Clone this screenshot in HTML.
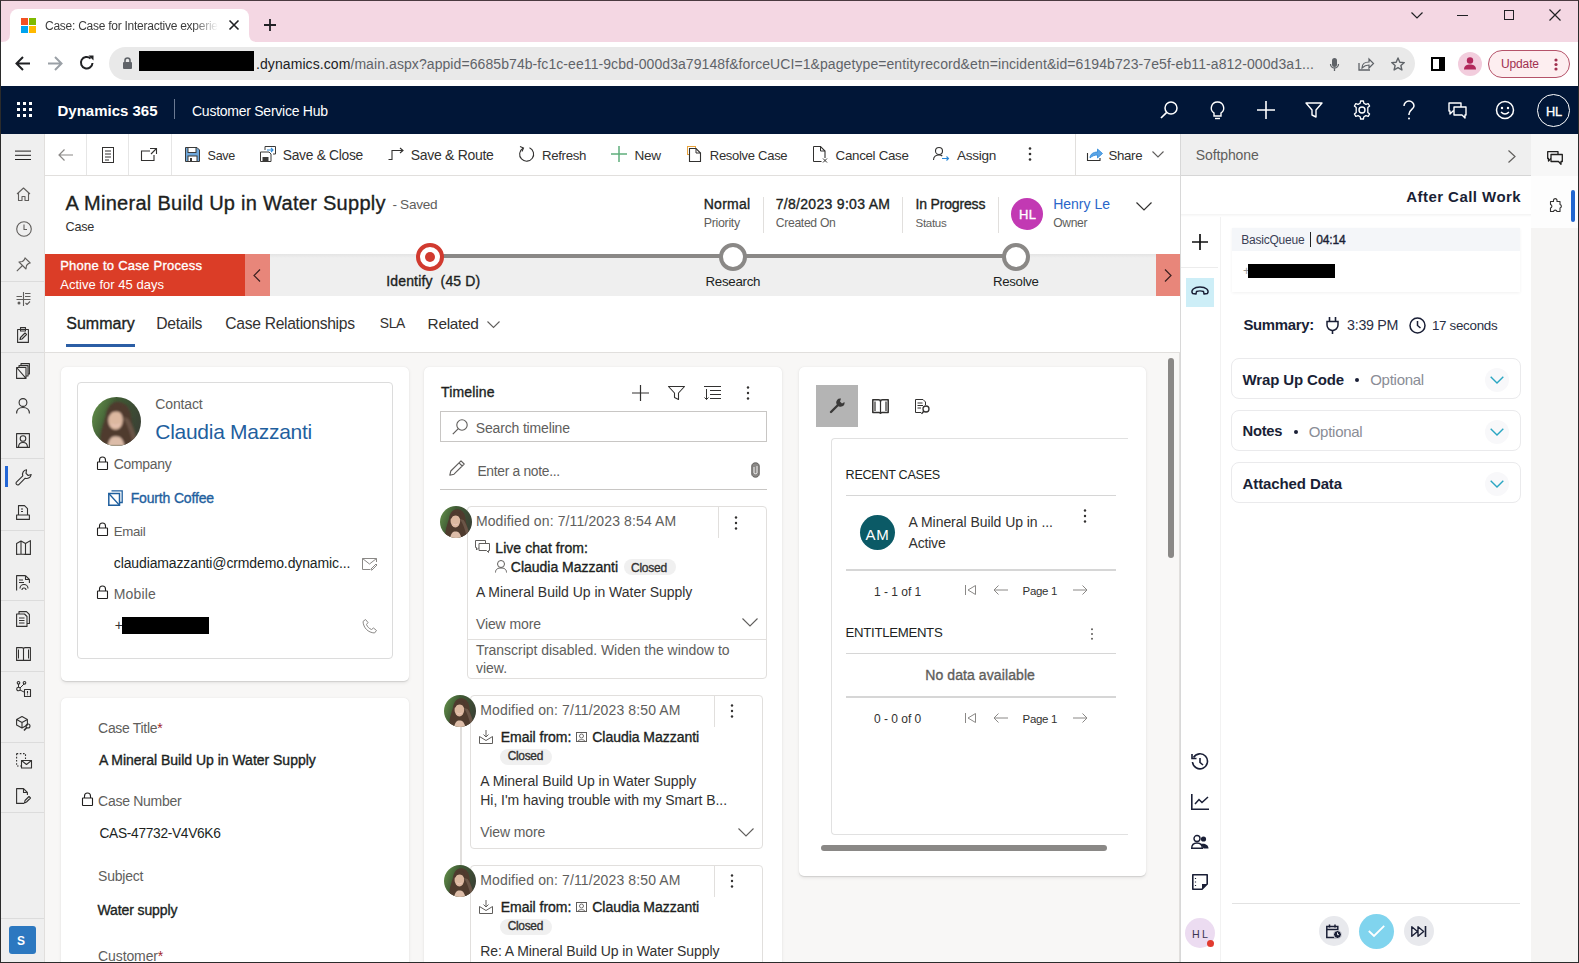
<!DOCTYPE html>
<html><head><meta charset="utf-8">
<style>
*{box-sizing:border-box;margin:0;padding:0}
html,body{width:1579px;height:963px;overflow:hidden;background:#fff;font-family:"Liberation Sans",sans-serif;color:#323130}
.a{position:absolute}
.t{position:absolute;white-space:nowrap;line-height:1}
svg{position:absolute;overflow:visible}
</style></head><body>
<div class="a" style="left:0px;top:0px;width:1579px;height:42px;background:#f4d7e3;"></div>
<div class="a" style="left:10px;top:9px;width:239px;height:34px;background:#fff;border-radius:8px 8px 0 0"></div>
<svg style="left:2px;top:34px;" width="8" height="8" viewBox="0 0 8 8"><path d="M0 8 Q8 8 8 0 L8 8 Z" fill="#fff"/></svg>
<svg style="left:249px;top:34px;" width="8" height="8" viewBox="0 0 8 8"><path d="M8 8 Q0 8 0 0 L0 8 Z" fill="#fff"/></svg>
<div class="a" style="left:21px;top:18px;width:7px;height:7px;background:#f25022;"></div>
<div class="a" style="left:29px;top:18px;width:7px;height:7px;background:#7fba00;"></div>
<div class="a" style="left:21px;top:26px;width:7px;height:7px;background:#00a4ef;"></div>
<div class="a" style="left:29px;top:26px;width:7px;height:7px;background:#ffb900;"></div>
<div class="t" style="left:45.0px;top:19.8px;font-size:12px;color:#3c3c3c;letter-spacing:-0.255px;-webkit-mask-image:linear-gradient(90deg,#000 85%,transparent 100%);">Case: Case for Interactive experie</div>
<svg style="left:229px;top:20px;" width="10" height="10" viewBox="0 0 10 10"><path d="M0.5 0.5L9.5 9.5M9.5 0.5L0.5 9.5" stroke="#202124" stroke-width="1.6"/></svg>
<svg style="left:264px;top:19px;" width="12" height="12" viewBox="0 0 12 12"><path d="M6 0V12M0 6H12" stroke="#202124" stroke-width="1.8"/></svg>
<svg style="left:1411px;top:12px;" width="12" height="7" viewBox="0 0 12 7"><path d="M0.5 0.5L6 6L11.5 0.5" stroke="#202124" stroke-width="1.2" fill="none"/></svg>
<svg style="left:1457px;top:15px;" width="11" height="1" viewBox="0 0 11 1"><path d="M0 0.5H11" stroke="#202124" stroke-width="1"/></svg>
<svg style="left:1504px;top:10px;" width="10" height="10" viewBox="0 0 10 10"><rect x="0.5" y="0.5" width="9" height="9" stroke="#202124" stroke-width="1" fill="none"/></svg>
<svg style="left:1549px;top:9px;" width="12" height="12" viewBox="0 0 12 12"><path d="M0.5 0.5L11.5 11.5M11.5 0.5L0.5 11.5" stroke="#202124" stroke-width="1.2"/></svg>
<div class="a" style="left:0px;top:42px;width:1579px;height:44px;background:#fff;"></div>
<svg style="left:15px;top:56px;" width="16" height="15" viewBox="0 0 16 15"><path d="M15 7.5H2M8 1L1.5 7.5L8 14" stroke="#202124" stroke-width="2" fill="none"/></svg>
<svg style="left:47px;top:56px;" width="16" height="15" viewBox="0 0 16 15"><path d="M1 7.5H14M8 1L14.5 7.5L8 14" stroke="#9aa0a6" stroke-width="2" fill="none"/></svg>
<svg style="left:79px;top:55px;" width="16" height="16" viewBox="0 0 16 16"><path d="M13.5 8A5.8 5.8 0 1 1 11.6 3.4" stroke="#202124" stroke-width="2" fill="none"/><path d="M9.5 0.5H14.5V5.5Z" fill="#202124"/></svg>
<div class="a" style="left:109px;top:47px;width:1306px;height:33px;background:#e9e9e9;border-radius:17px"></div>
<svg style="left:123px;top:57px;" width="9" height="12" viewBox="0 0 9 12"><rect x="0" y="5" width="9" height="7" rx="1" fill="#5f6368"/><path d="M2 5.5V3.5A2.5 2.5 0 0 1 7 3.5V5.5" stroke="#5f6368" stroke-width="1.6" fill="none"/></svg>
<div class="a" style="left:139px;top:51px;width:115px;height:20px;background:#000;"></div>
<div class="t" style="left:256px;top:57.1px;font-size:14px;color:#202124;letter-spacing:0.08px">.dynamics.com<span style="color:#5f6368">/main.aspx?appid=6685b74b-fc1c-ee11-9cbd-000d3a79148f&amp;forceUCI=1&amp;pagetype=entityrecord&amp;etn=incident&amp;id=6194b723-7e5f-eb11-a812-000d3a1...</span></div>
<svg style="left:1330px;top:58px;" width="9" height="13" viewBox="0 0 9 13"><rect x="2" y="0" width="5" height="9" rx="2.5" fill="#5f6368"/><path d="M0.5 6A4 4 0 0 0 8.5 6M4.5 10V13" stroke="#5f6368" stroke-width="1.3" fill="none"/></svg>
<svg style="left:1358px;top:58px;" width="16" height="13" viewBox="0 0 16 13"><path d="M1 5V12H12" stroke="#5f6368" stroke-width="1.3" fill="none"/><path d="M4 10C4 6 7 4 11 4V1L15.5 5.5L11 10V7C8 7 6 8 4 10Z" stroke="#5f6368" stroke-width="1.2" fill="none"/></svg>
<svg style="left:1391px;top:57px;" width="14" height="14" viewBox="0 0 14 14"><path d="M7 1L8.8 5.2L13.3 5.6L9.9 8.6L10.9 13L7 10.7L3.1 13L4.1 8.6L0.7 5.6L5.2 5.2Z" stroke="#5f6368" stroke-width="1.4" fill="none" stroke-linejoin="round"/></svg>
<svg style="left:1431px;top:57px;" width="14" height="14" viewBox="0 0 14 14"><rect x="1" y="1" width="12" height="12" stroke="#000" stroke-width="2" fill="none"/><rect x="8" y="1" width="5" height="12" fill="#000"/></svg>
<div class="a" style="left:1458px;top:52px;width:24px;height:24px;border-radius:50%;background:#f2cddd"></div>
<svg style="left:1463px;top:56px;" width="14" height="14" viewBox="0 0 14 14"><circle cx="7" cy="4.5" r="3.2" fill="#b2275b"/><path d="M1 13.5C1 9.5 4 8.5 7 8.5C10 8.5 13 9.5 13 13.5Z" fill="#b2275b"/></svg>
<div class="a" style="left:1488px;top:50px;width:82px;height:28px;border-radius:14px;border:1px solid #b5536a;background:#fdeef0"></div>
<div class="t" style="left:1501.0px;top:58.1px;font-size:12px;color:#a0304f;letter-spacing:-0.139px;">Update</div>
<svg style="left:1554px;top:58px;" width="4" height="13" viewBox="0 0 4 13"><circle cx="2" cy="2" r="1.6" fill="#a0304f"/><circle cx="2" cy="6.5" r="1.6" fill="#a0304f"/><circle cx="2" cy="11" r="1.6" fill="#a0304f"/></svg>
<div class="a" style="left:0px;top:86px;width:1579px;height:48px;background:#011637;"></div>
<svg style="left:17px;top:102px;" width="15" height="15" viewBox="0 0 15 15"><rect x="0" y="0" width="3" height="3" fill="#fff"/><rect x="6" y="0" width="3" height="3" fill="#fff"/><rect x="12" y="0" width="3" height="3" fill="#fff"/><rect x="0" y="6" width="3" height="3" fill="#fff"/><rect x="6" y="6" width="3" height="3" fill="#fff"/><rect x="12" y="6" width="3" height="3" fill="#fff"/><rect x="0" y="12" width="3" height="3" fill="#fff"/><rect x="6" y="12" width="3" height="3" fill="#fff"/><rect x="12" y="12" width="3" height="3" fill="#fff"/></svg>
<div class="t" style="left:57.5px;top:103.1px;font-size:15px;font-weight:bold;color:#fff;letter-spacing:-0.006px;">Dynamics 365</div>
<div class="a" style="left:174px;top:99px;width:1px;height:20px;background:#6b7a93;"></div>
<div class="t" style="left:192.0px;top:103.9px;font-size:14px;color:#fff;letter-spacing:-0.254px;">Customer Service Hub</div>
<svg style="left:1160px;top:101px;" width="18" height="18" viewBox="0 0 18 18"><circle cx="11" cy="7" r="6" stroke="#fff" stroke-width="1.5" fill="none"/><path d="M6.7 11.3L1 17" stroke="#fff" stroke-width="1.7"/></svg>
<svg style="left:1210px;top:101px;" width="15" height="19" viewBox="0 0 15 19"><path d="M7.5 1A6 6 0 0 0 4 12V15H11V12A6 6 0 0 0 7.5 1Z" stroke="#fff" stroke-width="1.4" fill="none"/><path d="M5 17.5H10" stroke="#fff" stroke-width="1.4"/></svg>
<svg style="left:1257px;top:101px;" width="18" height="18" viewBox="0 0 18 18"><path d="M9 0V18M0 9H18" stroke="#fff" stroke-width="1.6"/></svg>
<svg style="left:1305px;top:102px;" width="18" height="16" viewBox="0 0 18 16"><path d="M1 1H17L11 8V15L7 13V8Z" stroke="#fff" stroke-width="1.4" fill="none" stroke-linejoin="round"/></svg>
<svg style="left:1352px;top:100px;" width="20" height="20" viewBox="0 0 20 20"><circle cx="10" cy="10" r="3" stroke="#fff" stroke-width="1.4" fill="none"/><path d="M8.6 1H11.4L11.9 3.3L13.9 4.4L16.2 3.6L17.6 6L15.8 7.6V10V12.4L17.6 14L16.2 16.4L13.9 15.6L11.9 16.7L11.4 19H8.6L8.1 16.7L6.1 15.6L3.8 16.4L2.4 14L4.2 12.4V7.6L2.4 6L3.8 3.6L6.1 4.4L8.1 3.3Z" stroke="#fff" stroke-width="1.3" fill="none" stroke-linejoin="round"/></svg>
<svg style="left:1403px;top:101px;" width="12" height="19" viewBox="0 0 12 19"><path d="M1 5A5 5 0 0 1 11 5C11 8 6 9 6 13V14" stroke="#fff" stroke-width="1.5" fill="none"/><circle cx="6" cy="17.5" r="1" fill="#fff"/></svg>
<svg style="left:1448px;top:102px;" width="19" height="17" viewBox="0 0 19 17"><path d="M1 1H13V9H5L2 12V9H1Z" stroke="#fff" stroke-width="1.4" fill="none" stroke-linejoin="round"/><path d="M6 5H18V13H17V16L14 13H6Z" stroke="#fff" stroke-width="1.4" fill="#031838" stroke-linejoin="round"/></svg>
<svg style="left:1495px;top:100px;" width="20" height="20" viewBox="0 0 20 20"><circle cx="10" cy="10" r="8.5" stroke="#fff" stroke-width="1.5" fill="none"/><circle cx="7" cy="8" r="1.2" fill="#fff"/><circle cx="13" cy="8" r="1.2" fill="#fff"/><path d="M6 12Q10 16 14 12" stroke="#fff" stroke-width="1.4" fill="none"/></svg>
<div class="a" style="left:1537px;top:94px;width:33px;height:33px;border-radius:50%;border:1px solid #fff"></div>
<div class="t" style="left:1546.0px;top:105.7px;font-size:12.75px;-webkit-text-stroke:0.35px #fff;color:#fff;letter-spacing:-0.300px;">HL</div>
<div class="a" style="left:0px;top:134px;width:45px;height:829px;background:#efefef;border-right:1px solid #e1dfdd;"></div>
<div class="a" style="left:1px;top:281px;width:43px;height:1px;background:#dcdcdc;"></div>
<div class="a" style="left:1px;top:352px;width:43px;height:1px;background:#dcdcdc;"></div>
<div class="a" style="left:1px;top:458px;width:43px;height:1px;background:#dcdcdc;"></div>
<div class="a" style="left:1px;top:530px;width:43px;height:1px;background:#dcdcdc;"></div>
<div class="a" style="left:1px;top:600px;width:43px;height:1px;background:#dcdcdc;"></div>
<div class="a" style="left:1px;top:671px;width:43px;height:1px;background:#dcdcdc;"></div>
<div class="a" style="left:1px;top:742px;width:43px;height:1px;background:#dcdcdc;"></div>
<div class="a" style="left:1px;top:812px;width:43px;height:1px;background:#dcdcdc;"></div>
<div class="a" style="left:1px;top:918px;width:43px;height:1px;background:#dcdcdc;"></div>
<div class="a" style="left:5px;top:466px;width:3px;height:21px;background:#2266d6;"></div>
<div class="a" style="left:9px;top:926px;width:27px;height:28px;border-radius:3px;background:#2c78c0"></div>
<div class="t" style="left:17.0px;top:934.8px;font-size:12px;font-weight:bold;color:#fff;">S</div>
<div class="a" style="left:45px;top:134px;width:1136px;height:42px;background:#fff;border-bottom:1px solid #e1dfdd;"></div>
<svg style="left:15px;top:150px;" width="16" height="10" viewBox="0 0 16 10"><path d="M0 1.1H16M0 5.3H16M0 9.5H16" stroke="#201f1e" stroke-width="1"/></svg>
<div class="a" style="left:86px;top:134px;width:1px;height:41px;background:#e6e6e6;"></div>
<div class="a" style="left:128px;top:134px;width:1px;height:41px;background:#e6e6e6;"></div>
<div class="a" style="left:171px;top:134px;width:1px;height:41px;background:#e6e6e6;"></div>
<svg style="left:58px;top:149px;" width="15" height="12" viewBox="0 0 15 12"><path d="M15 6H1M6.5 0.5L1 6L6.5 11.5" stroke="#8a8886" stroke-width="1.2" fill="none"/></svg>
<svg style="left:102px;top:147px;" width="12" height="16" viewBox="0 0 12 16"><rect x="0.5" y="0.5" width="11" height="15" stroke="#323130" stroke-width="1" fill="none"/><path d="M3 4H9M3 7H9M3 10H9M3 13H7" stroke="#323130" stroke-width="1"/></svg>
<svg style="left:141px;top:148px;" width="16" height="13" viewBox="0 0 16 13"><path d="M9 3H0.5V12.5H13V7" stroke="#323130" stroke-width="1.1" fill="none"/><path d="M9 0.5H15.5V6M15.5 0.5L10 6" stroke="#323130" stroke-width="1.1" fill="none"/></svg>
<svg style="left:185px;top:147px;" width="15" height="15" viewBox="0 0 15 15"><path d="M0.5 0.5H12L14.5 3V14.5H0.5Z" fill="#6fa8dc" stroke="#3b3a39" stroke-width="1"/><rect x="3" y="0.5" width="8" height="5" fill="#fff" stroke="#3b3a39" stroke-width="1"/><rect x="3" y="9" width="9" height="5.5" fill="#fff" stroke="#3b3a39" stroke-width="1"/><rect x="5" y="11" width="2" height="3" fill="#3b3a39"/></svg>
<div class="t" style="left:207.6px;top:149.6px;font-size:12.55px;color:#323130;letter-spacing:-0.300px;">Save</div>
<svg style="left:260px;top:146px;" width="16" height="16" viewBox="0 0 16 16"><path d="M0.5 6H9L11 8V15.5H0.5Z" fill="#fff" stroke="#3b3a39" stroke-width="1"/><rect x="2.5" y="11" width="6" height="4.5" fill="#3b3a39"/><path d="M5 4V0.5H15.5V8H13" stroke="#3b3a39" stroke-width="1" fill="none"/><path d="M7 4H13M11 2L13 4L11 6" stroke="#2b88d8" stroke-width="1.1" fill="none"/></svg>
<div class="t" style="left:282.8px;top:148.5px;font-size:13.83px;color:#323130;letter-spacing:-0.300px;">Save &amp; Close</div>
<svg style="left:388px;top:148px;" width="16" height="12" viewBox="0 0 16 12"><path d="M0.5 11.5H4V2.5H15M12 0L15 2.5L12 5" stroke="#323130" stroke-width="1.1" fill="none"/></svg>
<div class="t" style="left:410.8px;top:148.4px;font-size:13.99px;color:#323130;letter-spacing:-0.300px;">Save &amp; Route</div>
<svg style="left:518px;top:146px;" width="17" height="16" viewBox="0 0 17 16"><path d="M5 2.2A7 7 0 1 0 11.5 1.8" stroke="#323130" stroke-width="1.1" fill="none"/><path d="M2 0.5L5.5 2L4 5.5" stroke="#323130" stroke-width="1.1" fill="none"/></svg>
<div class="t" style="left:541.9px;top:149.0px;font-size:13.25px;color:#323130;letter-spacing:-0.300px;">Refresh</div>
<svg style="left:611px;top:146px;" width="16" height="16" viewBox="0 0 16 16"><path d="M8 0V16M0 8H16" stroke="#5fae7c" stroke-width="1.5"/></svg>
<div class="t" style="left:634.6px;top:148.7px;font-size:13.6px;color:#323130;letter-spacing:-0.300px;">New</div>
<svg style="left:687px;top:146px;" width="14" height="16" viewBox="0 0 14 16"><rect x="0.5" y="0.5" width="8" height="8" fill="none" stroke="#e8a33c" stroke-width="1"/><path d="M2.5 2.5H9L13.5 7V15.5H2.5Z" fill="#fff" stroke="#323130" stroke-width="1.1"/><path d="M9 2.5V7H13.5" stroke="#323130" stroke-width="1" fill="none"/></svg>
<div class="t" style="left:709.8px;top:149.2px;font-size:13.04px;color:#323130;letter-spacing:-0.300px;">Resolve Case</div>
<svg style="left:813px;top:146px;" width="16" height="17" viewBox="0 0 16 17"><path d="M0.5 0.5H7.5L12 5V12M8.5 15.5H0.5Z" fill="none" stroke="#323130" stroke-width="1.1"/><path d="M0.5 0.5V15.5M7.5 0.5V5H12" stroke="#323130" stroke-width="1" fill="none"/><path d="M10 12.5L14 16.5M14 12.5L10 16.5" stroke="#323130" stroke-width="1"/></svg>
<div class="t" style="left:835.6px;top:148.9px;font-size:13.33px;color:#323130;letter-spacing:-0.300px;">Cancel Case</div>
<svg style="left:933px;top:147px;" width="16" height="14" viewBox="0 0 16 14"><circle cx="6" cy="4" r="3.5" stroke="#323130" stroke-width="1.1" fill="none"/><path d="M0.5 13C0.5 9.5 3 8 6 8C7.5 8 8.5 8.3 9.3 9" stroke="#323130" stroke-width="1.1" fill="none"/><path d="M9 11.5H15.5M13.5 9.5L15.5 11.5L13.5 13.5" stroke="#2b88d8" stroke-width="1.1" fill="none"/></svg>
<div class="t" style="left:957.0px;top:148.7px;font-size:13.59px;color:#323130;letter-spacing:-0.300px;">Assign</div>
<svg style="left:1028px;top:147px;" width="4" height="14" viewBox="0 0 4 14"><circle cx="2" cy="1.5" r="1.3" fill="#323130"/><circle cx="2" cy="7" r="1.3" fill="#323130"/><circle cx="2" cy="12.5" r="1.3" fill="#323130"/></svg>
<div class="a" style="left:1075px;top:134px;width:1px;height:41px;background:#e1dfdd;"></div>
<svg style="left:1087px;top:148px;" width="16" height="13" viewBox="0 0 16 13"><path d="M0.5 5V12.5H13V10" stroke="#323130" stroke-width="1.1" fill="none"/><path d="M3 10C3 6 6.5 4 10.5 4V1L15.5 5.5L10.5 10V7C7.5 7 5 8 3 10Z" fill="#5ba4e5" stroke="#2b88d8" stroke-width="0.8"/></svg>
<div class="t" style="left:1108.4px;top:149.0px;font-size:13.27px;color:#323130;letter-spacing:-0.300px;">Share</div>
<svg style="left:1152px;top:151px;" width="12" height="7" viewBox="0 0 12 7"><path d="M0.5 0.5L6 6L11.5 0.5" stroke="#605e5c" stroke-width="1.1" fill="none"/></svg>
<div class="a" style="left:45px;top:176px;width:1136px;height:78px;background:#fff;"></div>
<div class="t" style="left:65.6px;top:193.4px;font-size:20px;-webkit-text-stroke:0.35px #201f1e;color:#201f1e;letter-spacing:0.287px;">A Mineral Build Up in Water Supply</div>
<div class="t" style="left:392.4px;top:198.3px;font-size:13.61px;color:#605e5c;letter-spacing:-0.300px;">- Saved</div>
<div class="t" style="left:65.6px;top:221.2px;font-size:12.64px;color:#323130;letter-spacing:-0.300px;">Case</div>
<div class="t" style="left:703.7px;top:197.4px;font-size:14px;-webkit-text-stroke:0.35px #201f1e;color:#201f1e;letter-spacing:0.276px;">Normal</div>
<div class="t" style="left:703.7px;top:217.0px;font-size:12.41px;color:#605e5c;letter-spacing:-0.300px;">Priority</div>
<div class="a" style="left:763px;top:197px;width:1px;height:36px;background:#e1dfdd;"></div>
<div class="t" style="left:775.7px;top:197.4px;font-size:14px;-webkit-text-stroke:0.35px #201f1e;color:#201f1e;letter-spacing:0.304px;">7/8/2023 9:03 AM</div>
<div class="t" style="left:775.7px;top:217.2px;font-size:12.17px;color:#605e5c;letter-spacing:-0.300px;">Created On</div>
<div class="a" style="left:902px;top:197px;width:1px;height:36px;background:#e1dfdd;"></div>
<div class="t" style="left:915.5px;top:197.4px;font-size:14px;-webkit-text-stroke:0.35px #201f1e;color:#201f1e;letter-spacing:-0.168px;">In Progress</div>
<div class="t" style="left:915.5px;top:217.7px;font-size:11.57px;color:#605e5c;letter-spacing:-0.300px;">Status</div>
<div class="a" style="left:998px;top:197px;width:1px;height:36px;background:#e1dfdd;"></div>
<div class="a" style="left:1011px;top:198px;width:32px;height:32px;border-radius:50%;background:#c239b3"></div>
<div class="t" style="left:1019.0px;top:208.0px;font-size:13px;-webkit-text-stroke:0.35px #fff;color:#fff;letter-spacing:0.383px;">HL</div>
<div class="t" style="left:1053.2px;top:197.4px;font-size:14px;color:#2a66c9;letter-spacing:-0.001px;">Henry Le</div>
<div class="t" style="left:1053.2px;top:217.3px;font-size:12.09px;color:#605e5c;letter-spacing:-0.300px;">Owner</div>
<svg style="left:1136px;top:202px;" width="16" height="9" viewBox="0 0 16 9"><path d="M0.5 0.5L8 8L15.5 0.5" stroke="#323130" stroke-width="1.2" fill="none"/></svg>
<div class="a" style="left:45px;top:254px;width:200px;height:42px;background:#db3d27;"></div>
<div class="t" style="left:60.2px;top:258.8px;font-size:13px;-webkit-text-stroke:0.35px #fff;color:#fff;letter-spacing:0.261px;">Phone to Case Process</div>
<div class="t" style="left:60.2px;top:277.5px;font-size:13px;color:#fff;letter-spacing:0.028px;">Active for 45 days</div>
<div class="a" style="left:245px;top:254px;width:25px;height:42px;background:#e8867a;"></div>
<svg style="left:253px;top:269px;" width="8" height="13" viewBox="0 0 8 13"><path d="M7 0.5L1 6.5L7 12.5" stroke="#3b2020" stroke-width="1.2" fill="none"/></svg>
<div class="a" style="left:270px;top:254px;width:886px;height:42px;background:#efefef;"></div>
<div class="a" style="left:1156px;top:254px;width:24px;height:42px;background:#e8867a;"></div>
<svg style="left:1164px;top:269px;" width="8" height="13" viewBox="0 0 8 13"><path d="M1 0.5L7 6.5L1 12.5" stroke="#3b2020" stroke-width="1.2" fill="none"/></svg>
<div class="a" style="left:270px;top:254px;width:160px;height:4px;background:linear-gradient(#e4e4e4,#efefef);"></div>
<div class="a" style="left:430px;top:254px;width:586px;height:4px;background:#8a8886;"></div>
<div class="a" style="left:1016px;top:254px;width:140px;height:4px;background:linear-gradient(#e4e4e4,#efefef);"></div>
<svg style="left:416px;top:243px;" width="28" height="28" viewBox="0 0 28 28"><circle cx="14" cy="14" r="12" fill="#fff" stroke="#d13a2f" stroke-width="4"/><circle cx="14" cy="14" r="5" fill="#d13a2f"/></svg>
<svg style="left:719px;top:243px;" width="28" height="28" viewBox="0 0 28 28"><circle cx="14" cy="14" r="12" fill="#fff" stroke="#8a8886" stroke-width="4"/></svg>
<svg style="left:1002px;top:243px;" width="28" height="28" viewBox="0 0 28 28"><circle cx="14" cy="14" r="12" fill="#fff" stroke="#8a8886" stroke-width="4"/></svg>
<div class="t" style="left:386.3px;top:274.3px;font-size:14px;-webkit-text-stroke:0.35px #201f1e;color:#201f1e;letter-spacing:0.139px;">Identify&nbsp;&nbsp;(45 D)</div>
<div class="t" style="left:705.5px;top:274.9px;font-size:13.34px;color:#201f1e;letter-spacing:-0.300px;">Research</div>
<div class="t" style="left:993.0px;top:275.0px;font-size:13.23px;color:#201f1e;letter-spacing:-0.300px;">Resolve</div>
<div class="a" style="left:45px;top:296px;width:1136px;height:57px;background:#fff;border-bottom:1px solid #e1dfdd;"></div>
<div class="t" style="left:66.3px;top:315.7px;font-size:16px;-webkit-text-stroke:0.35px #201f1e;color:#201f1e;letter-spacing:-0.009px;">Summary</div>
<div class="a" style="left:66px;top:344px;width:69px;height:3px;background:#2b5ea5;"></div>
<div class="t" style="left:156.3px;top:315.9px;font-size:15.7px;color:#323130;letter-spacing:-0.300px;">Details</div>
<div class="t" style="left:225.3px;top:316.0px;font-size:15.65px;color:#323130;letter-spacing:-0.300px;">Case Relationships</div>
<div class="t" style="left:379.7px;top:317.4px;font-size:13.91px;color:#323130;letter-spacing:-0.300px;">SLA</div>
<div class="t" style="left:427.6px;top:316.2px;font-size:15.41px;color:#323130;letter-spacing:-0.300px;">Related</div>
<svg style="left:487px;top:321px;" width="13" height="7" viewBox="0 0 13 7"><path d="M0.5 0.5L6.5 6.5L12.5 0.5" stroke="#605e5c" stroke-width="1.1" fill="none"/></svg>
<div class="a" style="left:45px;top:353px;width:1135px;height:610px;background:#f8f7f6;"></div>
<div class="a" style="left:1179px;top:353px;width:1px;height:610px;background:#e1dfdd;"></div>
<div class="a" style="left:1168px;top:358px;width:6px;height:200px;border-radius:3px;background:#8a8886"></div>
<div class="a" style="left:61px;top:367px;width:348px;height:314px;background:#fff;border-radius:5px;box-shadow:0 0.3px 0.9px rgba(0,0,0,.10),0 1.6px 3.6px rgba(0,0,0,.08);"></div>
<div class="a" style="left:77px;top:382px;width:316px;height:277px;border:1px solid #dcdcdc;border-radius:4px;background:#fff"></div>
<svg style="left:92.1px;top:396.5px" width="49" height="49" viewBox="0 0 100 100"><defs><clipPath id="avc"><circle cx="50" cy="50" r="50"/></clipPath><linearGradient id="avg" x1="0" y1="0.3" x2="1" y2="0.7"><stop offset="0" stop-color="#5f8a48"/><stop offset="0.35" stop-color="#3f5a34"/><stop offset="1" stop-color="#3a3f35"/></linearGradient><filter id="avb"><feGaussianBlur stdDeviation="1.8"/></filter></defs><g clip-path="url(#avc)"><rect width="100" height="100" fill="url(#avg)"/><g filter="url(#avb)"><path d="M18 100C14 80 22 60 28 40C30 20 42 8 56 10C72 12 80 28 80 44C82 60 92 80 90 100Z" fill="#4f3a2e"/><path d="M60 40C70 50 78 70 84 100H92C92 80 84 60 74 44Z" fill="#6a5546"/><path d="M32 100C34 86 40 80 48 80C58 80 64 86 66 100Z" fill="#dcbca8"/><ellipse cx="48" cy="47" rx="15" ry="20" fill="#dcb8a0"/><path d="M33 42C34 24 44 18 54 19C64 20 66 30 64 38C58 30 50 27 40 32Z" fill="#4f3a2e"/><path d="M40 56Q48 62 57 56" stroke="#e9c4b8" stroke-width="3" fill="none"/></g></g></svg>
<div class="t" style="left:155.3px;top:397.1px;font-size:14px;color:#605e5c;letter-spacing:-0.141px;">Contact</div>
<div class="t" style="left:155.3px;top:420.9px;font-size:21px;color:#1f5f9e;letter-spacing:-0.279px;">Claudia Mazzanti</div>
<svg style="left:97px;top:456px;" width="11" height="14" viewBox="0 0 11 14"><path d="M2.5 6V4A3 3 0 0 1 8.5 4V6" stroke="#201f1e" stroke-width="1.1" fill="none"/><rect x="0.5" y="6" width="10" height="7.5" rx="0.5" stroke="#201f1e" stroke-width="1.1" fill="none"/></svg>
<div class="t" style="left:113.8px;top:458.1px;font-size:13.95px;color:#605e5c;letter-spacing:-0.300px;">Company</div>
<svg style="left:108px;top:490px;" width="15" height="16" viewBox="0 0 15 16"><path d="M0.8 3.5H11.5V15.2H0.8Z" stroke="#1f5f9e" stroke-width="1.5" fill="none"/><path d="M3.5 0.8H14.2V12.5H11.5M0.8 3.5L11.5 15.2" stroke="#1f5f9e" stroke-width="1.3" fill="none"/></svg>
<div class="t" style="left:130.7px;top:491.3px;font-size:14px;-webkit-text-stroke:0.35px #1f5f9e;color:#1f5f9e;letter-spacing:-0.162px;">Fourth Coffee</div>
<svg style="left:97px;top:522px;" width="11" height="14" viewBox="0 0 11 14"><path d="M2.5 6V4A3 3 0 0 1 8.5 4V6" stroke="#201f1e" stroke-width="1.1" fill="none"/><rect x="0.5" y="6" width="10" height="7.5" rx="0.5" stroke="#201f1e" stroke-width="1.1" fill="none"/></svg>
<div class="t" style="left:113.8px;top:525.0px;font-size:13.24px;color:#605e5c;letter-spacing:-0.300px;">Email</div>
<div class="t" style="left:113.8px;top:556.2px;font-size:14px;color:#201f1e;letter-spacing:-0.125px;">claudiamazzanti@crmdemo.dynamic...</div>
<svg style="left:362px;top:558px;" width="15" height="12" viewBox="0 0 15 12"><path d="M0.5 0.5H14.5V4M0.5 0.5V11.5H8M0.5 0.5L7.5 6L14.5 0.5" stroke="#8a8886" stroke-width="1" fill="none"/><path d="M9 11L14 6L15 7L10 12H9Z" stroke="#8a8886" stroke-width="1" fill="none"/></svg>
<svg style="left:97px;top:585px;" width="11" height="14" viewBox="0 0 11 14"><path d="M2.5 6V4A3 3 0 0 1 8.5 4V6" stroke="#201f1e" stroke-width="1.1" fill="none"/><rect x="0.5" y="6" width="10" height="7.5" rx="0.5" stroke="#201f1e" stroke-width="1.1" fill="none"/></svg>
<div class="t" style="left:113.8px;top:587.0px;font-size:14px;color:#605e5c;letter-spacing:0.152px;">Mobile</div>
<div class="t" style="left:114.7px;top:618.1px;font-size:14px;color:#323130;">+</div>
<div class="a" style="left:122px;top:617px;width:87px;height:17px;background:#000;"></div>
<svg style="left:362px;top:619px;" width="15" height="15" viewBox="0 0 15 15"><path d="M3.5 0.5L6 3.5L4.5 5.5C5.5 8 7 9.5 9.5 10.5L11.5 9L14.5 11.5L12.5 14C6 13.5 1.5 9 1 2.5Z" stroke="#8a8886" stroke-width="1" fill="none" stroke-linejoin="round"/></svg>
<div class="a" style="left:61px;top:698px;width:348px;height:280px;background:#fff;border-radius:5px;box-shadow:0 0.3px 0.9px rgba(0,0,0,.10),0 1.6px 3.6px rgba(0,0,0,.08);"></div>
<div class="t" style="left:98.1px;top:720.7px;font-size:13.98px;color:#605e5c;letter-spacing:-0.300px;">Case Title<span style="color:#a4262c">*</span></div>
<div class="t" style="left:98.9px;top:752.6px;font-size:14px;-webkit-text-stroke:0.35px #201f1e;color:#201f1e;letter-spacing:-0.014px;">A Mineral Build Up in Water Supply</div>
<svg style="left:82px;top:792px;" width="11" height="14" viewBox="0 0 11 14"><path d="M2.5 6V4A3 3 0 0 1 8.5 4V6" stroke="#201f1e" stroke-width="1.1" fill="none"/><rect x="0.5" y="6" width="10" height="7.5" rx="0.5" stroke="#201f1e" stroke-width="1.1" fill="none"/></svg>
<div class="t" style="left:98.1px;top:794.3px;font-size:14px;color:#605e5c;letter-spacing:-0.277px;">Case Number</div>
<div class="t" style="left:99.5px;top:826.6px;font-size:13.72px;color:#201f1e;letter-spacing:-0.300px;">CAS-47732-V4V6K6</div>
<div class="t" style="left:98.1px;top:869.4px;font-size:14px;color:#605e5c;letter-spacing:-0.233px;">Subject</div>
<div class="t" style="left:97.5px;top:903.4px;font-size:14px;-webkit-text-stroke:0.35px #201f1e;color:#201f1e;letter-spacing:-0.116px;">Water supply</div>
<div class="t" style="left:98.1px;top:948.8px;font-size:14px;color:#605e5c;letter-spacing:-0.116px;">Customer<span style="color:#a4262c">*</span></div>
<div class="a" style="left:424px;top:367px;width:358px;height:620px;background:#fff;border-radius:5px;box-shadow:0 0.3px 0.9px rgba(0,0,0,.10),0 1.6px 3.6px rgba(0,0,0,.08);"></div>
<div class="t" style="left:441.1px;top:385.2px;font-size:14px;-webkit-text-stroke:0.35px #201f1e;color:#201f1e;letter-spacing:0.145px;">Timeline</div>
<svg style="left:632px;top:385px;" width="17" height="16" viewBox="0 0 17 16"><path d="M8.5 0V16M0 8H17" stroke="#323130" stroke-width="1.2"/></svg>
<svg style="left:668px;top:386px;" width="17" height="14" viewBox="0 0 17 14"><path d="M0.5 0.5H16.5L10.5 7V13.5L6.5 11.5V7Z" stroke="#323130" stroke-width="1.1" fill="none" stroke-linejoin="round"/></svg>
<svg style="left:704px;top:386px;" width="17" height="14" viewBox="0 0 17 14"><path d="M0 0.5H17M6 4.5H17M6 8.5H17M6 12.5H17" stroke="#323130" stroke-width="1"/><path d="M2.5 3V13.5M0.5 11.5L2.5 13.5L4.5 11.5" stroke="#323130" stroke-width="1" fill="none"/></svg>
<svg style="left:746px;top:386px;" width="4" height="14" viewBox="0 0 4 14"><circle cx="2" cy="1.5" r="1.2" fill="#323130"/><circle cx="2" cy="7" r="1.2" fill="#323130"/><circle cx="2" cy="12.5" r="1.2" fill="#323130"/></svg>
<div class="a" style="left:440px;top:411px;width:327px;height:31px;border:1px solid #c8c6c4;background:#fff"></div>
<svg style="left:452px;top:419px;" width="16" height="16" viewBox="0 0 16 16"><circle cx="10" cy="6" r="5.2" stroke="#605e5c" stroke-width="1.1" fill="none"/><path d="M6.3 9.7L0.8 15.2" stroke="#605e5c" stroke-width="1.2"/></svg>
<div class="t" style="left:475.8px;top:420.6px;font-size:14px;color:#605e5c;letter-spacing:-0.164px;">Search timeline</div>
<svg style="left:449px;top:460px;" width="16" height="16" viewBox="0 0 16 16"><path d="M12 0.8L15.2 4L5 14.2L0.8 15.2L1.8 11Z M10 2.8L13.2 6" stroke="#605e5c" stroke-width="1.1" fill="none" stroke-linejoin="round"/></svg>
<div class="t" style="left:477.4px;top:464.6px;font-size:13.83px;color:#605e5c;letter-spacing:-0.300px;">Enter a note...</div>
<svg style="left:751px;top:462px;" width="9" height="16" viewBox="0 0 9 16"><path d="M4.5 0.8C6.5 0.8 8.2 2 8.2 4V12C8.2 14 6.5 15.2 4.5 15.2C2.5 15.2 0.8 14 0.8 12V4C0.8 2 2.5 0.8 4.5 0.8Z" fill="#8a8886" stroke="#605e5c" stroke-width="1"/><path d="M3 5V11C3 12 6 12 6 11V4" stroke="#fff" stroke-width="0.9" fill="none"/></svg>
<div class="a" style="left:440px;top:489px;width:327px;height:1px;background:#c8c6c4;"></div>
<div class="a" style="left:460px;top:727px;width:2px;height:140px;background:#e1dfdd;"></div>
<div class="a" style="left:467px;top:506px;width:300px;height:173px;border:1px solid #e1dfdd;border-radius:4px;background:#fff"></div>
<svg style="left:440.0px;top:506.0px" width="32" height="32" viewBox="0 0 100 100"><defs><clipPath id="avc"><circle cx="50" cy="50" r="50"/></clipPath><linearGradient id="avg" x1="0" y1="0.3" x2="1" y2="0.7"><stop offset="0" stop-color="#5f8a48"/><stop offset="0.35" stop-color="#3f5a34"/><stop offset="1" stop-color="#3a3f35"/></linearGradient><filter id="avb"><feGaussianBlur stdDeviation="1.8"/></filter></defs><g clip-path="url(#avc)"><rect width="100" height="100" fill="url(#avg)"/><g filter="url(#avb)"><path d="M18 100C14 80 22 60 28 40C30 20 42 8 56 10C72 12 80 28 80 44C82 60 92 80 90 100Z" fill="#4f3a2e"/><path d="M60 40C70 50 78 70 84 100H92C92 80 84 60 74 44Z" fill="#6a5546"/><path d="M32 100C34 86 40 80 48 80C58 80 64 86 66 100Z" fill="#dcbca8"/><ellipse cx="48" cy="47" rx="15" ry="20" fill="#dcb8a0"/><path d="M33 42C34 24 44 18 54 19C64 20 66 30 64 38C58 30 50 27 40 32Z" fill="#4f3a2e"/><path d="M40 56Q48 62 57 56" stroke="#e9c4b8" stroke-width="3" fill="none"/></g></g></svg>
<div class="a" style="left:718px;top:507px;width:1px;height:31px;background:#e1dfdd;"></div>
<div class="t" style="left:475.9px;top:513.9px;font-size:14px;color:#605e5c;letter-spacing:0.126px;">Modified on: 7/11/2023 8:54 AM</div>
<svg style="left:734px;top:516px;" width="4" height="14" viewBox="0 0 4 14"><circle cx="2" cy="1.5" r="1.2" fill="#323130"/><circle cx="2" cy="7" r="1.2" fill="#323130"/><circle cx="2" cy="12.5" r="1.2" fill="#323130"/></svg>
<svg style="left:475px;top:540px;" width="15" height="13" viewBox="0 0 15 13"><path d="M0.5 0.5H10.5V7.5H4L1.5 10V7.5H0.5Z" stroke="#605e5c" stroke-width="1" fill="none" stroke-linejoin="round"/><path d="M4 3.5H14.5V10.5H13.5V12.5L11.5 10.5H4Z" stroke="#605e5c" stroke-width="1" fill="#fff" stroke-linejoin="round"/></svg>
<div class="t" style="left:495.3px;top:540.9px;font-size:14px;-webkit-text-stroke:0.35px #201f1e;color:#201f1e;letter-spacing:0.056px;">Live chat from:</div>
<svg style="left:495px;top:560px;" width="12" height="13" viewBox="0 0 12 13"><circle cx="6" cy="4" r="3.5" stroke="#605e5c" stroke-width="1" fill="none"/><path d="M0.5 12.5C0.5 9 3 8 6 8C9 8 11.5 9 11.5 12.5" stroke="#605e5c" stroke-width="1" fill="none"/></svg>
<div class="t" style="left:510.8px;top:559.8px;font-size:14px;-webkit-text-stroke:0.35px #201f1e;color:#201f1e;letter-spacing:-0.012px;">Claudia Mazzanti</div>
<div class="a" style="left:624px;top:559px;width:52px;height:16px;border-radius:8px;background:#f0f0f0"></div>
<div class="t" style="left:631.0px;top:561.5px;font-size:12px;-webkit-text-stroke:0.35px #323130;color:#323130;letter-spacing:-0.250px;">Closed</div>
<div class="t" style="left:475.9px;top:585.0px;font-size:14px;color:#323130;letter-spacing:-0.029px;">A Mineral Build Up in Water Supply</div>
<div class="t" style="left:475.9px;top:616.9px;font-size:14px;color:#605e5c;letter-spacing:-0.097px;">View more</div>
<svg style="left:742px;top:618px;" width="16" height="9" viewBox="0 0 16 9"><path d="M0.5 0.5L8 8L15.5 0.5" stroke="#605e5c" stroke-width="1.1" fill="none"/></svg>
<div class="a" style="left:467px;top:639px;width:300px;height:1px;background:#e1dfdd;"></div>
<div class="t" style="left:475.9px;top:642.7px;font-size:14px;color:#605e5c;letter-spacing:-0.026px;">Transcript disabled. Widen the window to</div>
<div class="t" style="left:475.9px;top:661.4px;font-size:14px;color:#605e5c;">view.</div>
<div class="a" style="left:470px;top:695px;width:293px;height:154px;border:1px solid #e1dfdd;border-radius:4px;background:#fff"></div>
<svg style="left:444.0px;top:695.0px" width="32" height="32" viewBox="0 0 100 100"><defs><clipPath id="avc"><circle cx="50" cy="50" r="50"/></clipPath><linearGradient id="avg" x1="0" y1="0.3" x2="1" y2="0.7"><stop offset="0" stop-color="#5f8a48"/><stop offset="0.35" stop-color="#3f5a34"/><stop offset="1" stop-color="#3a3f35"/></linearGradient><filter id="avb"><feGaussianBlur stdDeviation="1.8"/></filter></defs><g clip-path="url(#avc)"><rect width="100" height="100" fill="url(#avg)"/><g filter="url(#avb)"><path d="M18 100C14 80 22 60 28 40C30 20 42 8 56 10C72 12 80 28 80 44C82 60 92 80 90 100Z" fill="#4f3a2e"/><path d="M60 40C70 50 78 70 84 100H92C92 80 84 60 74 44Z" fill="#6a5546"/><path d="M32 100C34 86 40 80 48 80C58 80 64 86 66 100Z" fill="#dcbca8"/><ellipse cx="48" cy="47" rx="15" ry="20" fill="#dcb8a0"/><path d="M33 42C34 24 44 18 54 19C64 20 66 30 64 38C58 30 50 27 40 32Z" fill="#4f3a2e"/><path d="M40 56Q48 62 57 56" stroke="#e9c4b8" stroke-width="3" fill="none"/></g></g></svg>
<div class="a" style="left:714px;top:696px;width:1px;height:31px;background:#e1dfdd;"></div>
<div class="t" style="left:480.3px;top:702.8px;font-size:14px;color:#605e5c;letter-spacing:0.119px;">Modified on: 7/11/2023 8:50 AM</div>
<svg style="left:730px;top:704px;" width="4" height="14" viewBox="0 0 4 14"><circle cx="2" cy="1.5" r="1.2" fill="#323130"/><circle cx="2" cy="7" r="1.2" fill="#323130"/><circle cx="2" cy="12.5" r="1.2" fill="#323130"/></svg>
<svg style="left:479px;top:730px;" width="14" height="14" viewBox="0 0 14 14"><path d="M0.5 6.5V13.5H13.5V6.5M0.5 6.5L7 10.5L13.5 6.5" stroke="#605e5c" stroke-width="1" fill="none"/><path d="M7 0V7M4.5 4.5L7 7L9.5 4.5" stroke="#605e5c" stroke-width="1" fill="none"/></svg>
<div class="t" style="left:500.8px;top:730.0px;font-size:14px;-webkit-text-stroke:0.35px #201f1e;color:#201f1e;letter-spacing:-0.029px;">Email from:</div>
<svg style="left:576px;top:732px;" width="11" height="10" viewBox="0 0 11 10"><rect x="0.5" y="0.5" width="10" height="9" stroke="#605e5c" stroke-width="1" fill="none"/><circle cx="5.5" cy="4" r="2" stroke="#605e5c" stroke-width="0.9" fill="none"/><path d="M2 9.5C2 7 9 7 9 9.5" stroke="#605e5c" stroke-width="0.9" fill="none"/></svg>
<div class="t" style="left:592.3px;top:730.0px;font-size:14px;-webkit-text-stroke:0.35px #201f1e;color:#201f1e;letter-spacing:-0.039px;">Claudia Mazzanti</div>
<div class="a" style="left:500px;top:749px;width:52px;height:16px;border-radius:8px;background:#f0f0f0"></div>
<div class="t" style="left:507.7px;top:750.8px;font-size:11.92px;-webkit-text-stroke:0.35px #323130;color:#323130;letter-spacing:-0.300px;">Closed</div>
<div class="t" style="left:480.3px;top:774.1px;font-size:14px;color:#323130;letter-spacing:-0.041px;">A Mineral Build Up in Water Supply</div>
<div class="t" style="left:480.3px;top:792.9px;font-size:14px;color:#323130;letter-spacing:-0.043px;">Hi, I'm having trouble with my Smart B...</div>
<div class="t" style="left:480.3px;top:825.2px;font-size:14px;color:#605e5c;letter-spacing:-0.110px;">View more</div>
<svg style="left:738px;top:828px;" width="16" height="9" viewBox="0 0 16 9"><path d="M0.5 0.5L8 8L15.5 0.5" stroke="#605e5c" stroke-width="1.1" fill="none"/></svg>
<div class="a" style="left:470px;top:865px;width:293px;height:154px;border:1px solid #e1dfdd;border-radius:4px;background:#fff"></div>
<svg style="left:444.0px;top:865.0px" width="32" height="32" viewBox="0 0 100 100"><defs><clipPath id="avc"><circle cx="50" cy="50" r="50"/></clipPath><linearGradient id="avg" x1="0" y1="0.3" x2="1" y2="0.7"><stop offset="0" stop-color="#5f8a48"/><stop offset="0.35" stop-color="#3f5a34"/><stop offset="1" stop-color="#3a3f35"/></linearGradient><filter id="avb"><feGaussianBlur stdDeviation="1.8"/></filter></defs><g clip-path="url(#avc)"><rect width="100" height="100" fill="url(#avg)"/><g filter="url(#avb)"><path d="M18 100C14 80 22 60 28 40C30 20 42 8 56 10C72 12 80 28 80 44C82 60 92 80 90 100Z" fill="#4f3a2e"/><path d="M60 40C70 50 78 70 84 100H92C92 80 84 60 74 44Z" fill="#6a5546"/><path d="M32 100C34 86 40 80 48 80C58 80 64 86 66 100Z" fill="#dcbca8"/><ellipse cx="48" cy="47" rx="15" ry="20" fill="#dcb8a0"/><path d="M33 42C34 24 44 18 54 19C64 20 66 30 64 38C58 30 50 27 40 32Z" fill="#4f3a2e"/><path d="M40 56Q48 62 57 56" stroke="#e9c4b8" stroke-width="3" fill="none"/></g></g></svg>
<div class="a" style="left:714px;top:866px;width:1px;height:31px;background:#e1dfdd;"></div>
<div class="t" style="left:480.3px;top:872.9px;font-size:14px;color:#605e5c;letter-spacing:0.119px;">Modified on: 7/11/2023 8:50 AM</div>
<svg style="left:730px;top:874px;" width="4" height="14" viewBox="0 0 4 14"><circle cx="2" cy="1.5" r="1.2" fill="#323130"/><circle cx="2" cy="7" r="1.2" fill="#323130"/><circle cx="2" cy="12.5" r="1.2" fill="#323130"/></svg>
<svg style="left:479px;top:900px;" width="14" height="14" viewBox="0 0 14 14"><path d="M0.5 6.5V13.5H13.5V6.5M0.5 6.5L7 10.5L13.5 6.5" stroke="#605e5c" stroke-width="1" fill="none"/><path d="M7 0V7M4.5 4.5L7 7L9.5 4.5" stroke="#605e5c" stroke-width="1" fill="none"/></svg>
<div class="t" style="left:500.8px;top:899.7px;font-size:14px;-webkit-text-stroke:0.35px #201f1e;color:#201f1e;letter-spacing:-0.029px;">Email from:</div>
<svg style="left:576px;top:902px;" width="11" height="10" viewBox="0 0 11 10"><rect x="0.5" y="0.5" width="10" height="9" stroke="#605e5c" stroke-width="1" fill="none"/><circle cx="5.5" cy="4" r="2" stroke="#605e5c" stroke-width="0.9" fill="none"/><path d="M2 9.5C2 7 9 7 9 9.5" stroke="#605e5c" stroke-width="0.9" fill="none"/></svg>
<div class="t" style="left:592.3px;top:899.7px;font-size:14px;-webkit-text-stroke:0.35px #201f1e;color:#201f1e;letter-spacing:-0.039px;">Claudia Mazzanti</div>
<div class="a" style="left:500px;top:919px;width:52px;height:16px;border-radius:8px;background:#f0f0f0"></div>
<div class="t" style="left:507.7px;top:920.9px;font-size:11.92px;-webkit-text-stroke:0.35px #323130;color:#323130;letter-spacing:-0.300px;">Closed</div>
<div class="t" style="left:480.3px;top:943.9px;font-size:14px;color:#323130;letter-spacing:-0.085px;">Re: A Mineral Build Up in Water Supply</div>
<div class="a" style="left:799px;top:367px;width:347px;height:509px;background:#fff;border-radius:5px;box-shadow:0 0.3px 0.9px rgba(0,0,0,.10),0 1.6px 3.6px rgba(0,0,0,.08);"></div>
<div class="a" style="left:816px;top:385px;width:42px;height:42px;background:#b4b4b4;"></div>
<svg style="left:829px;top:398px;" width="16" height="16" viewBox="0 0 16 16"><path d="M2 14L9 7" stroke="#3b3a39" stroke-width="2.4" stroke-linecap="round"/><path d="M12 0.5A4 4 0 0 0 7.5 6A4 4 0 0 0 12.5 8.5A4 4 0 0 0 15.5 4L13 5.5L11 3.5Z" fill="#3b3a39"/></svg>
<svg style="left:872px;top:399px;" width="17" height="15" viewBox="0 0 17 15"><path d="M0.8 0.8H6.5C7.5 0.8 8.5 1.5 8.5 2.5C8.5 1.5 9.5 0.8 10.5 0.8H16.2V13.5H10C9 13.5 8.5 14.2 8.5 14.2C8.5 14.2 8 13.5 7 13.5H0.8Z" stroke="#323130" stroke-width="1.5" fill="none" stroke-linejoin="round"/><path d="M8.5 2.5V14M3 2.5V12M14 2.5V12" stroke="#323130" stroke-width="1.2"/></svg>
<svg style="left:915px;top:399px;" width="16" height="16" viewBox="0 0 16 16"><path d="M0.5 0.5H8L10.5 3V6M6 13.5H0.5V0.5" stroke="#323130" stroke-width="1" fill="none"/><path d="M2.5 4H7.5M2.5 6.5H8M2.5 9H6" stroke="#323130" stroke-width="1"/><circle cx="11" cy="10" r="3" stroke="#323130" stroke-width="1.3" fill="none"/><path d="M8.8 12.2L6.5 14.8" stroke="#323130" stroke-width="1.5"/></svg>
<div class="a" style="left:831px;top:438px;width:297px;height:397px;border:1px solid #e1e1e1;border-right:none;border-radius:4px 0 0 4px;background:#fff"></div>
<div class="t" style="left:845.6px;top:468.6px;font-size:12.61px;color:#201f1e;letter-spacing:-0.300px;">RECENT CASES</div>
<div class="a" style="left:846px;top:495px;width:270px;height:1px;background:#d6d6d6;"></div>
<div class="a" style="left:860px;top:515px;width:35px;height:35px;border-radius:50%;background:#0b5a66"></div>
<div class="t" style="left:865.4px;top:526.8px;font-size:15px;color:#fff;letter-spacing:0.900px;">AM</div>
<div class="t" style="left:908.6px;top:515.1px;font-size:14px;color:#323130;letter-spacing:-0.046px;">A Mineral Build Up in ...</div>
<div class="t" style="left:908.6px;top:535.8px;font-size:14px;color:#323130;letter-spacing:-0.205px;">Active</div>
<svg style="left:1083px;top:509px;" width="4" height="14" viewBox="0 0 4 14"><circle cx="2" cy="1.5" r="1.2" fill="#323130"/><circle cx="2" cy="7" r="1.2" fill="#323130"/><circle cx="2" cy="12.5" r="1.2" fill="#323130"/></svg>
<div class="a" style="left:846px;top:569px;width:270px;height:2px;background:#d6d6d6;"></div>
<div class="t" style="left:874.0px;top:585.7px;font-size:12px;color:#323130;letter-spacing:-0.018px;">1 - 1 of 1</div>
<svg style="left:965px;top:584.9px;" width="11" height="10" viewBox="0 0 11 10"><path d="M0.5 0V10" stroke="#8a8886" stroke-width="1"/><path d="M10.5 0.5L3 5L10.5 9.5Z" stroke="#8a8886" stroke-width="1" fill="none" stroke-linejoin="round"/></svg>
<svg style="left:993px;top:584.9px;" width="15" height="10" viewBox="0 0 15 10"><path d="M15 5H1M5.5 0.5L1 5L5.5 9.5" stroke="#8a8886" stroke-width="1" fill="none"/></svg>
<div class="t" style="left:1022.6px;top:586.2px;font-size:11.48px;color:#323130;letter-spacing:-0.300px;">Page 1</div>
<svg style="left:1073px;top:584.9px;" width="15" height="10" viewBox="0 0 15 10"><path d="M0 5H14M9.5 0.5L14 5L9.5 9.5" stroke="#8a8886" stroke-width="1" fill="none"/></svg>
<div class="t" style="left:845.6px;top:625.9px;font-size:13.2px;color:#201f1e;letter-spacing:-0.300px;">ENTITLEMENTS</div>
<svg style="left:1090px;top:628px;" width="4" height="12" viewBox="0 0 4 12"><circle cx="2" cy="1.2" r="1" fill="#605e5c"/><circle cx="2" cy="6" r="1" fill="#605e5c"/><circle cx="2" cy="10.8" r="1" fill="#605e5c"/></svg>
<div class="a" style="left:846px;top:653px;width:270px;height:1px;background:#d6d6d6;"></div>
<div class="t" style="left:925.2px;top:668.4px;font-size:14px;-webkit-text-stroke:0.35px #605e5c;color:#605e5c;letter-spacing:0.095px;">No data available</div>
<div class="a" style="left:846px;top:696px;width:270px;height:2px;background:#d6d6d6;"></div>
<div class="t" style="left:874.0px;top:713.3px;font-size:12px;color:#323130;letter-spacing:-0.018px;">0 - 0 of 0</div>
<svg style="left:965px;top:712.5px;" width="11" height="10" viewBox="0 0 11 10"><path d="M0.5 0V10" stroke="#8a8886" stroke-width="1"/><path d="M10.5 0.5L3 5L10.5 9.5Z" stroke="#8a8886" stroke-width="1" fill="none" stroke-linejoin="round"/></svg>
<svg style="left:993px;top:712.5px;" width="15" height="10" viewBox="0 0 15 10"><path d="M15 5H1M5.5 0.5L1 5L5.5 9.5" stroke="#8a8886" stroke-width="1" fill="none"/></svg>
<div class="t" style="left:1022.6px;top:713.8px;font-size:11.48px;color:#323130;letter-spacing:-0.300px;">Page 1</div>
<svg style="left:1073px;top:712.5px;" width="15" height="10" viewBox="0 0 15 10"><path d="M0 5H14M9.5 0.5L14 5L9.5 9.5" stroke="#8a8886" stroke-width="1" fill="none"/></svg>
<div class="a" style="left:821px;top:845px;width:286px;height:6px;border-radius:3px;background:#8a8886"></div>
<div class="a" style="left:1180px;top:134px;width:1px;height:829px;background:#d8d8d8;"></div>
<div class="a" style="left:1181px;top:134px;width:350px;height:829px;background:#fff;"></div>
<div class="a" style="left:1181px;top:134px;width:350px;height:42px;background:#efefef;border-bottom:1px solid #d6d6d6;"></div>
<div class="t" style="left:1195.7px;top:148.1px;font-size:14px;color:#605e5c;letter-spacing:-0.091px;">Softphone</div>
<svg style="left:1508px;top:150px;" width="8" height="13" viewBox="0 0 8 13"><path d="M0.5 0.5L7 6.5L0.5 12.5" stroke="#605e5c" stroke-width="1.2" fill="none"/></svg>
<div class="a" style="left:1531px;top:134px;width:48px;height:42px;background:#f7f7f7;"></div>
<div class="a" style="left:1531px;top:176px;width:48px;height:52px;background:#fdfdfd;"></div>
<div class="a" style="left:1531px;top:228px;width:48px;height:735px;background:#f5f4f3;"></div>
<svg style="left:1547px;top:151px;" width="16" height="14" viewBox="0 0 16 14"><path d="M0.7 0.7H11V7.5H4L1.5 10V7.5H0.7Z" stroke="#201f1e" stroke-width="1.3" fill="none" stroke-linejoin="round"/><path d="M4 3.5H15.3V10.5H14V13.3L11.5 10.5H4Z" stroke="#201f1e" stroke-width="1.3" fill="#f5f5f5" stroke-linejoin="round"/></svg>
<svg style="left:1548px;top:198px;" width="14" height="16" viewBox="0 0 14 16"><path d="M5.5 2A1.8 1.8 0 0 1 9 2V3.5H12V6.5A1.8 1.8 0 0 1 12 10V13.5H9A1.8 1.8 0 0 0 5.5 13.5H2.5V10A1.8 1.8 0 0 0 2.5 6.5V3.5H5.5Z" stroke="#323130" stroke-width="1.1" fill="none" stroke-linejoin="round"/></svg>
<div class="a" style="left:1571px;top:190px;width:4px;height:32px;background:#2266d0;border-radius:2px;"></div>
<div class="t" style="left:1406.2px;top:189.0px;font-size:15px;font-weight:bold;color:#1a1f36;letter-spacing:0.459px;">After Call Work</div>
<div class="a" style="left:1181px;top:214px;width:350px;height:3px;background:linear-gradient(#f3f3f3,#fff);"></div>
<div class="a" style="left:1220px;top:217px;width:1px;height:746px;background:#f2f2f2;"></div>
<svg style="left:1192px;top:234px;" width="16" height="16" viewBox="0 0 16 16"><path d="M8 0V16M0 8H16" stroke="#111" stroke-width="1.7"/></svg>
<div class="a" style="left:1181px;top:267px;width:37px;height:1px;background:#ececec;"></div>
<div class="a" style="left:1186px;top:278px;width:28px;height:29px;background:#cdeef7;"></div>
<svg style="left:1191px;top:286px;" width="18" height="9" viewBox="0 0 18 9"><path d="M1.5 7.5C-0.5 4 3 1 9 1C15 1 18.5 4 16.5 7.5L13 8L12.5 5.5C10.5 4.8 7.5 4.8 5.5 5.5L5 8Z" stroke="#1a1f36" stroke-width="1.4" fill="none" stroke-linejoin="round"/></svg>
<div class="a" style="left:1232px;top:228px;width:288px;height:64px;background:#fff;box-shadow:0 1px 3px rgba(0,0,0,.06)"></div>
<div class="a" style="left:1232px;top:228px;width:288px;height:23px;background:#f4f6f9;"></div>
<div class="t" style="left:1241.3px;top:234.1px;font-size:12px;color:#3a3f55;letter-spacing:-0.230px;">BasicQueue</div>
<div class="a" style="left:1310px;top:232px;width:1px;height:15px;background:#222;"></div>
<div class="t" style="left:1316.3px;top:234.1px;font-size:12px;-webkit-text-stroke:0.35px #1a1f36;color:#1a1f36;letter-spacing:-0.157px;">04:14</div>
<div class="t" style="left:1243.0px;top:264.8px;font-size:12px;color:#999;">+</div>
<div class="a" style="left:1248px;top:264px;width:87px;height:14px;background:#000;"></div>
<div class="t" style="left:1243.4px;top:317.9px;font-size:14.93px;font-weight:bold;color:#1a1f36;letter-spacing:-0.300px;">Summary:</div>
<svg style="left:1326px;top:317px;" width="13" height="17" viewBox="0 0 13 17"><path d="M3.5 0V4.5M9.5 0V4.5" stroke="#1a1f36" stroke-width="1.6"/><path d="M1 4.5H12V8A5.5 5.5 0 0 1 1 8Z" stroke="#1a1f36" stroke-width="1.5" fill="none"/><path d="M6.5 13.5V17" stroke="#1a1f36" stroke-width="1.6"/></svg>
<div class="t" style="left:1347.1px;top:318.4px;font-size:14.26px;color:#2a2f45;letter-spacing:-0.300px;">3:39 PM</div>
<svg style="left:1409px;top:317px;" width="17" height="17" viewBox="0 0 17 17"><circle cx="8.5" cy="8.5" r="7.5" stroke="#1a1f36" stroke-width="1.5" fill="none"/><path d="M8.5 4V8.5L11.5 11" stroke="#1a1f36" stroke-width="1.5" fill="none"/></svg>
<div class="t" style="left:1431.9px;top:319.2px;font-size:13.39px;color:#2a2f45;letter-spacing:-0.300px;">17 seconds</div>
<div class="a" style="left:1231px;top:358px;width:290px;height:41px;border:1px solid #eaeaec;border-radius:8px;background:#fff"></div>
<div class="t" style="left:1242.6px;top:371.5px;font-size:15px;font-weight:bold;color:#1a1f36;letter-spacing:-0.151px;">Wrap Up Code</div>
<div class="a" style="left:1355.4px;top:377.5px;width:4px;height:4px;border-radius:50%;background:#1a1f36"></div>
<div class="t" style="left:1370.2px;top:371.5px;font-size:15px;color:#8a8d96;letter-spacing:-0.267px;">Optional</div>
<div class="a" style="left:1485px;top:367.5px;width:24px;height:24px;border-radius:50%;background:#f8f8fa"></div>
<svg style="left:1490px;top:376px;" width="14" height="8" viewBox="0 0 14 8"><path d="M0.7 0.7L7 7L13.3 0.7" stroke="#2aa6c2" stroke-width="1.4" fill="none"/></svg>
<div class="a" style="left:1231px;top:410px;width:290px;height:41px;border:1px solid #eaeaec;border-radius:8px;background:#fff"></div>
<div class="t" style="left:1242.6px;top:423.7px;font-size:14.76px;font-weight:bold;color:#1a1f36;letter-spacing:-0.300px;">Notes</div>
<div class="a" style="left:1293.6px;top:429.5px;width:4px;height:4px;border-radius:50%;background:#1a1f36"></div>
<div class="t" style="left:1308.7px;top:423.5px;font-size:15px;color:#8a8d96;letter-spacing:-0.267px;">Optional</div>
<div class="a" style="left:1485px;top:419.5px;width:24px;height:24px;border-radius:50%;background:#f8f8fa"></div>
<svg style="left:1490px;top:428px;" width="14" height="8" viewBox="0 0 14 8"><path d="M0.7 0.7L7 7L13.3 0.7" stroke="#2aa6c2" stroke-width="1.4" fill="none"/></svg>
<div class="a" style="left:1231px;top:462px;width:290px;height:41px;border:1px solid #eaeaec;border-radius:8px;background:#fff"></div>
<div class="t" style="left:1242.6px;top:475.5px;font-size:15px;font-weight:bold;color:#1a1f36;letter-spacing:-0.113px;">Attached Data</div>
<div class="a" style="left:1485px;top:471.5px;width:24px;height:24px;border-radius:50%;background:#f8f8fa"></div>
<svg style="left:1490px;top:480px;" width="14" height="8" viewBox="0 0 14 8"><path d="M0.7 0.7L7 7L13.3 0.7" stroke="#2aa6c2" stroke-width="1.4" fill="none"/></svg>
<svg style="left:1191px;top:753px;" width="18" height="18" viewBox="0 0 18 18"><path d="M2.5 4.5A7.5 7.5 0 1 1 1.5 9" stroke="#1a1f36" stroke-width="1.6" fill="none"/><path d="M1 1V5.5H5.5" stroke="#1a1f36" stroke-width="1.6" fill="none"/><path d="M9 5V9.5L12 12" stroke="#1a1f36" stroke-width="1.6" fill="none"/></svg>
<svg style="left:1191px;top:794px;" width="18" height="16" viewBox="0 0 18 16"><path d="M0.8 0V15.2H18" stroke="#1a1f36" stroke-width="1.6" fill="none"/><path d="M4 10L8 5.5L11 8.5L17 3" stroke="#1a1f36" stroke-width="1.5" fill="none"/></svg>
<svg style="left:1191px;top:835px;" width="18" height="14" viewBox="0 0 18 14"><circle cx="6" cy="3.5" r="3" stroke="#1a1f36" stroke-width="1.4" fill="none"/><path d="M0.7 13.3C0.7 9.5 3 8 6 8C9 8 11.3 9.5 11.3 13.3Z" stroke="#1a1f36" stroke-width="1.4" fill="none"/><circle cx="12.5" cy="4" r="2.6" fill="#1a1f36"/><path d="M10 9C13 8 17.5 9.5 17.5 13.5H12.5Z" fill="#1a1f36"/></svg>
<svg style="left:1192px;top:874px;" width="16" height="16" viewBox="0 0 16 16"><path d="M0.8 0.8H15.2V10L10 15.2H0.8Z" stroke="#1a1f36" stroke-width="1.6" fill="none" stroke-linejoin="round"/><path d="M10 15.2V10H15.2Z" fill="#1a1f36"/><path d="M3.5 4V5M3.5 7.5V8.5M3.5 11V12" stroke="#1a1f36" stroke-width="1.2"/></svg>
<div class="a" style="left:1185px;top:918px;width:30px;height:30px;border-radius:50%;background:#ecdcf1"></div>
<div class="t" style="left:1192.0px;top:929.0px;font-size:10.67px;color:#3b3553;letter-spacing:-0.300px;">H L</div>
<div class="a" style="left:1206.5px;top:940px;width:7px;height:7px;border-radius:50%;background:#e23b2f"></div>
<div class="a" style="left:1232px;top:903px;width:288px;height:1px;background:#e2e2e2;"></div>
<div class="a" style="left:1319px;top:916px;width:30px;height:30px;border-radius:50%;background:#e8e9ed"></div>
<svg style="left:1326px;top:924px;" width="16" height="15" viewBox="0 0 16 15"><rect x="0.8" y="2.5" width="11" height="11" stroke="#1a1f36" stroke-width="1.5" fill="none"/><path d="M0.8 5.5H11.8M3.5 0.5V3.5M9 0.5V3.5" stroke="#1a1f36" stroke-width="1.5"/><circle cx="11.5" cy="10.5" r="4" fill="#1a1f36" stroke="#e8e9ed" stroke-width="1"/><path d="M11.5 8.5V10.7H13" stroke="#fff" stroke-width="0.9" fill="none"/></svg>
<div class="a" style="left:1359px;top:914px;width:35px;height:35px;border-radius:50%;background:#80d4ee"></div>
<svg style="left:1368px;top:925px;" width="17" height="12" viewBox="0 0 17 12"><path d="M0.8 6L6 11L16.2 0.8" stroke="#fff" stroke-width="1.8" fill="none"/></svg>
<div class="a" style="left:1404px;top:916px;width:30px;height:30px;border-radius:50%;background:#e8e9ed"></div>
<svg style="left:1411px;top:926px;" width="16" height="11" viewBox="0 0 16 11"><path d="M0.8 0.8L6.5 5.5L0.8 10.2Z M7 0.8L12.7 5.5L7 10.2Z" stroke="#1a1f36" stroke-width="1.4" fill="none" stroke-linejoin="round"/><path d="M14.5 0V11" stroke="#1a1f36" stroke-width="1.6"/></svg>
<svg style="left:16px;top:187px;" width="15" height="14" viewBox="0 0 15 14"><path d="M1 7L7.5 1L14 7M2.5 5.8V13.5H6V9.5H9V13.5H12.5V5.8" stroke="#605e5c" stroke-width="1.1" fill="none" stroke-linejoin="round"/></svg>
<svg style="left:15.5px;top:221px;" width="16" height="16" viewBox="0 0 16 16"><circle cx="8" cy="8" r="7.3" stroke="#605e5c" stroke-width="1.1" fill="none" stroke-linejoin="round"/><path d="M8 3.5V8.5H11" stroke="#605e5c" stroke-width="1.1" fill="none" stroke-linejoin="round"/></svg>
<svg style="left:16px;top:257px;" width="15" height="15" viewBox="0 0 15 15"><path d="M9 0.8L14.2 6L12.5 6.5L10.5 8.5L10 12L3 5L6.5 4.5L8.5 2.5Z" stroke="#605e5c" stroke-width="1.1" fill="none" stroke-linejoin="round"/><path d="M6.5 8.5L0.8 14.2" stroke="#605e5c" stroke-width="1.1"/></svg>
<svg style="left:16px;top:292px;" width="15" height="14" viewBox="0 0 15 14"><path d="M7.5 0V14M9 1.5H14.5M9 4.5H14.5M0.5 4.5H6M0.5 7.5H14.5" stroke="#605e5c" stroke-width="1.1"/><circle cx="3" cy="11" r="1.5" fill="#605e5c"/><path d="M9.5 11L11 12.5L14 9.5" stroke="#605e5c" stroke-width="1.1" fill="none" stroke-linejoin="round"/></svg>
<svg style="left:17px;top:327px;" width="12" height="16" viewBox="0 0 12 16"><path d="M0.6 2.5H11.4V15.4H0.6Z" stroke="#323130" stroke-width="1.1" fill="none" stroke-linejoin="round"/><path d="M3.5 0.6H8.5V4H3.5Z" stroke="#323130" stroke-width="1.1" fill="none" stroke-linejoin="round"/><path d="M3 12.5L3.5 10.5L8 6L9.5 7.5L5 12Z" stroke="#323130" stroke-width="1.1" fill="none" stroke-linejoin="round"/></svg>
<svg style="left:16px;top:363px;" width="14" height="16" viewBox="0 0 14 16"><path d="M0.6 4.5H10V15.4H0.6Z M0.6 4.5L10 15.4" stroke="#323130" stroke-width="1.1" fill="none" stroke-linejoin="round"/><path d="M3 4.5V2.6H12V13H10M5 2.6V0.6H13.4V11H12" stroke="#323130" stroke-width="1.1" fill="none" stroke-linejoin="round"/></svg>
<svg style="left:16px;top:398px;" width="14" height="16" viewBox="0 0 14 16"><circle cx="7" cy="4.5" r="3.9" stroke="#323130" stroke-width="1.1" fill="none" stroke-linejoin="round"/><path d="M0.6 15.5C0.6 11 3.5 9.5 7 9.5C10.5 9.5 13.4 11 13.4 15.5" stroke="#323130" stroke-width="1.1" fill="none" stroke-linejoin="round"/></svg>
<svg style="left:16px;top:433px;" width="14" height="15" viewBox="0 0 14 15"><rect x="0.6" y="0.6" width="12.8" height="13.8" stroke="#323130" stroke-width="1.1" fill="none" stroke-linejoin="round"/><circle cx="7" cy="5.5" r="2.8" stroke="#323130" stroke-width="1.1" fill="none" stroke-linejoin="round"/><path d="M2.5 14.4C2.5 10.5 4.5 9.5 7 9.5C9.5 9.5 11.5 10.5 11.5 14.4" stroke="#323130" stroke-width="1.1" fill="none" stroke-linejoin="round"/></svg>
<svg style="left:15px;top:469px;" width="17" height="17" viewBox="0 0 17 17"><path d="M11.5 0.8A4.5 4.5 0 0 0 7.8 6.8L1.2 13.4A1.8 1.8 0 0 0 3.6 15.8L10.2 9.2A4.5 4.5 0 0 0 16.2 5.5L13.2 6.5L11 4.3Z" stroke="#323130" stroke-width="1.1" fill="none" stroke-linejoin="round"/></svg>
<svg style="left:16px;top:505px;" width="14" height="15" viewBox="0 0 14 15"><path d="M2.5 10V0.6H8.5L11.5 3.6V10" stroke="#323130" stroke-width="1.1" fill="none" stroke-linejoin="round"/><path d="M0.6 10H13.4V14.4H0.6Z" stroke="#323130" stroke-width="1.1" fill="none" stroke-linejoin="round"/><path d="M5 4H7M5 6.5H7" stroke="#323130" stroke-width="1"/></svg>
<svg style="left:16px;top:540px;" width="15" height="15" viewBox="0 0 15 15"><path d="M0.6 3.5L5 1V14L0.6 14.4Z M5 1L9.5 3.5V14.4L5 14M9.5 3.5L14.4 0.6V14.4H9.5" stroke="#323130" stroke-width="1.1" fill="none" stroke-linejoin="round"/></svg>
<svg style="left:16px;top:575px;" width="14" height="16" viewBox="0 0 14 16"><path d="M9.5 0.6H0.6V15.4M9.5 0.6L13.4 4.5V8M9.5 0.6V4.5H13.4" stroke="#323130" stroke-width="1.1" fill="none" stroke-linejoin="round"/><path d="M3 5H7M3 7.5H8" stroke="#323130" stroke-width="1"/><path d="M4 13.5A4 4 0 0 1 12 13.5M6 15A2 2 0 0 1 10 15" stroke="#323130" stroke-width="1.1" fill="none" stroke-linejoin="round"/></svg>
<svg style="left:16px;top:611px;" width="14" height="16" viewBox="0 0 14 16"><path d="M3 3V0.6H10.5L13.4 3.5V12.5H11" stroke="#323130" stroke-width="1.1" fill="none" stroke-linejoin="round"/><path d="M0.6 3H8.5L11 5.5V15.4H0.6Z" stroke="#323130" stroke-width="1.1" fill="none" stroke-linejoin="round"/><path d="M3 7H8.5M3 9.5H8.5M3 12H8.5" stroke="#323130" stroke-width="1"/></svg>
<svg style="left:16px;top:647px;" width="15" height="14" viewBox="0 0 15 14"><path d="M0.6 0.6H6C6.8 0.6 7.5 1.2 7.5 2C7.5 1.2 8.2 0.6 9 0.6H14.4V13.4H0.6Z M7.5 2V13.4" stroke="#323130" stroke-width="1.1" fill="none" stroke-linejoin="round"/><path d="M2.5 2.5V11.5M12.5 2.5V11.5" stroke="#323130" stroke-width="1"/></svg>
<svg style="left:16px;top:681px;" width="15" height="16" viewBox="0 0 15 16"><circle cx="2.5" cy="8" r="1.8" stroke="#323130" stroke-width="1.1" fill="none" stroke-linejoin="round"/><circle cx="2.5" cy="1.8" r="1.3" stroke="#323130" stroke-width="1.1" fill="none" stroke-linejoin="round"/><circle cx="8.5" cy="1.8" r="1.3" stroke="#323130" stroke-width="1.1" fill="none" stroke-linejoin="round"/><path d="M2.5 3V6.3M4 7L8 3M4 9L8 11" stroke="#323130" stroke-width="1"/><rect x="8.5" y="8.5" width="6" height="7" stroke="#323130" stroke-width="1.1" fill="none" stroke-linejoin="round"/><path d="M11.5 10V12.5M11.5 13.5V14.3" stroke="#323130" stroke-width="1.1"/></svg>
<svg style="left:16px;top:716px;" width="16" height="16" viewBox="0 0 16 16"><path d="M0.6 3.5L6 0.6L11.4 3.5V9L6 12L0.6 9Z M0.6 3.5L6 6.4L11.4 3.5M6 6.4V12" stroke="#323130" stroke-width="1.1" fill="none" stroke-linejoin="round"/><circle cx="12" cy="10" r="2" stroke="#323130" stroke-width="1.1" fill="none" stroke-linejoin="round"/><path d="M10.8 11.5L8 14.5" stroke="#323130" stroke-width="1.6"/></svg>
<svg style="left:16px;top:753px;" width="16" height="16" viewBox="0 0 16 16"><path d="M0.6 0.6H9.5V6M0.6 0.6V13H5" stroke="#323130" stroke-width="1.1" stroke-dasharray="1.6 1.6" fill="none"/><rect x="5.5" y="7.5" width="10" height="7.5" stroke="#323130" stroke-width="1.1" fill="none" stroke-linejoin="round"/><path d="M5.5 7.5L10.5 11.5L15.5 7.5" stroke="#323130" stroke-width="1.1" fill="none" stroke-linejoin="round"/></svg>
<svg style="left:16px;top:788px;" width="15" height="16" viewBox="0 0 15 16"><path d="M8 15.4H0.6V0.6H7.5L11.4 4.5V7M7.5 0.6V4.5H11.4" stroke="#323130" stroke-width="1.1" fill="none" stroke-linejoin="round"/><path d="M8.5 15L9 12.5L13 8.5L14.5 10L10.5 14Z" stroke="#323130" stroke-width="1.1" fill="none" stroke-linejoin="round"/></svg>
<div class="a" style="left:0;top:0;width:1579px;height:963px;border:1px solid #2b2b2b;border-top-color:#4a3a40;pointer-events:none"></div>
</body></html>
